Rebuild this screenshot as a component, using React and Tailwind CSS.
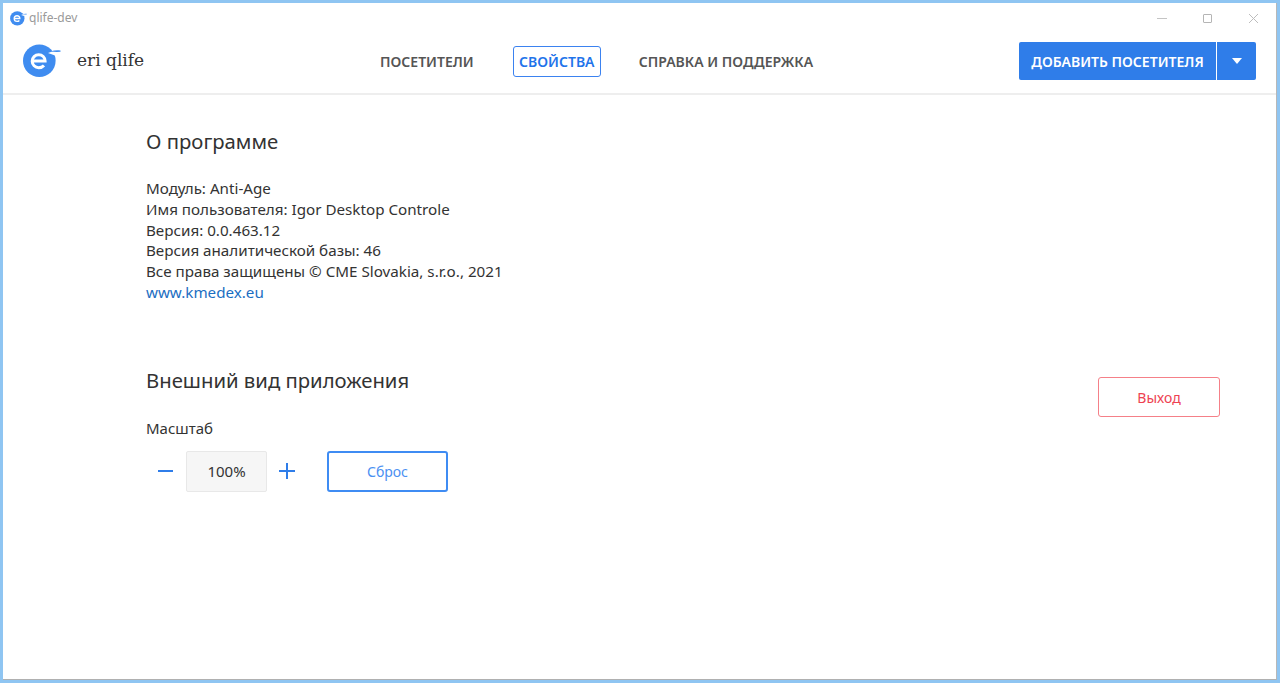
import React from 'react';

const Logo = ({ width, height }) => (
  <svg width={width} height={height} viewBox="0 0 38 34" fill="none">
    <circle cx="16.3" cy="16.8" r="16.3" fill="#3f8cf0" />
    <path d="M25 9l7-2.5v5z" fill="#fff" />
    <path d="M9.5 17h12.6c0-3.6-2.8-6.3-6.4-6.3s-6.5 2.9-6.5 6.5 2.9 6.5 6.5 6.5c2.2 0 4-.9 5.3-2.3" stroke="#fff" strokeWidth="3" />
    <path d="M27.5 7.6q4-1.6 10-1.2v1.4q-5 .3-10-.2z" fill="#3f8cf0" />
  </svg>
);

const App = () => {
  return (
    <div className="h-[683px] w-[1280px] overflow-hidden border-[3px] border-[#8fc5f2] bg-white font-['Noto_Sans','Open_Sans',sans-serif] text-[#333333]">
      <div className="h-full border-b border-r border-b-[#b0b0b0] border-r-[#b8b8b8]">
        {/* Title bar */}
        <div className="flex h-[30px] items-center justify-between pl-[7px] pr-[17px]">
          <div className="flex items-center gap-[2px]">
            <Logo width={17} height={15} />
            <span className="text-[12px] text-[#9a9a9a]">qlife-dev</span>
          </div>
          <div className="flex items-center gap-[36px]">
            <div className="h-px w-[10px] bg-[#c4c4c4]" />
            <div className="h-[9px] w-[9px] rounded-[1px] border border-[#b5b5b5]" />
            <svg width="11" height="11" viewBox="0 0 11 11" stroke="#bdbdbd" strokeWidth="1">
              <path d="M1 1l9 9M10 1l-9 9" />
            </svg>
          </div>
        </div>

        {/* Header */}
        <header className="flex h-[62px] items-center border-b-2 border-[#eeeeee] pb-[4px] pl-[20px] pr-[20px]">
          <div className="flex w-[357px] shrink-0 items-center gap-[16px]">
            <Logo width={38} height={34} />
            <span className="font-['DejaVu_Serif',serif] text-[17px] text-[#333333]">eri qlife</span>
          </div>
          <nav className="flex items-center text-[14px] font-semibold text-[#555555]">
            <span>ПОСЕТИТЕЛИ</span>
            <span className="ml-[39px] flex h-[31px] w-[88px] items-center justify-center rounded-[3px] border border-[#3b82f0] text-[#1f74ea]">СВОЙСТВА</span>
            <span className="ml-[38px]">СПРАВКА И ПОДДЕРЖКА</span>
          </nav>
          <div className="ml-auto flex h-[38px] text-white">
            <button className="flex w-[197px] items-center justify-center rounded-l-[2px] bg-[#2f7de9] text-[14px] font-semibold">ДОБАВИТЬ ПОСЕТИТЕЛЯ</button>
            <button className="ml-px flex w-[39px] items-center justify-center rounded-r-[2px] bg-[#2f7de9]">
              <span className="h-0 w-0 border-x-[5px] border-t-[6px] border-x-transparent border-t-white" />
            </button>
          </div>
        </header>

        {/* Content */}
        <main className="flex justify-between pl-[143px] pr-[56px] pt-[30px]">
          <div>
            <h2 className="text-[20.3px] leading-[32px] text-[#333333]">О программе</h2>
            <div className="mt-[21px] text-[15.2px] leading-[20.75px]">
              <p>Модуль: Anti-Age</p>
              <p>Имя пользователя: Igor Desktop Controle</p>
              <p>Версия: 0.0.463.12</p>
              <p>Версия аналитической базы: 46</p>
              <p>Все права защищены © CME Slovakia, s.r.o., 2021</p>
              <a className="text-[#1b6ec2]" href="#">www.kmedex.eu</a>
            </div>
            <h2 className="mt-[61px] text-[20.3px] leading-[32px] text-[#333333]">Внешний вид приложения</h2>
            <p className="mt-[22px] text-[15px] leading-[20px]">Масштаб</p>
            <div className="mt-[13px] flex items-center">
              <button className="flex h-[40px] w-[40px] items-center justify-center pr-[2px]">
                <span className="h-[2px] w-[15px] bg-[#2f7de9]" />
              </button>
              <div className="flex h-[41px] w-[81px] items-center justify-center rounded-[2px] border border-[#e8e8e8] bg-[#f6f6f6] text-[15px]">100%</div>
              <button className="relative flex h-[40px] w-[40px] items-center justify-center pr-[1px]">
                <span className="h-[2px] w-[16px] bg-[#2f7de9]" />
                <span className="absolute h-[16px] w-[2px] bg-[#2f7de9]" />
              </button>
              <button className="ml-[20px] flex h-[41px] w-[121px] items-center justify-center rounded-[3px] border-2 border-[#3f8cf3] text-[14px] text-[#4b90f2]">Сброс</button>
            </div>
          </div>
          <button className="mt-[252px] flex h-[40px] w-[122px] items-center justify-center rounded-[3px] border border-[#f58088] text-[14px] text-[#ee4252]">Выход</button>
        </main>
      </div>
    </div>
  );
};

export default App;
